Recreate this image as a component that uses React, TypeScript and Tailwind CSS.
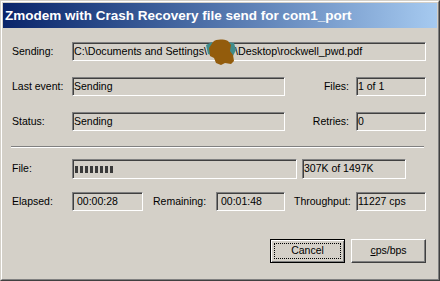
import React from "react";

const sunken =
  "flex items-center border border-t-[#808080] border-l-[#808080] border-b-white border-r-white shadow-[inset_1px_1px_0_#404040]";

interface FieldProps {
  className: string;
  children?: React.ReactNode;
}

const Field: React.FC<FieldProps> = ({ className, children }) => (
  <div className={`${sunken} ${className}`}>{children}</div>
);

const Label: React.FC<FieldProps> = ({ className, children }) => (
  <div className={`flex items-center whitespace-nowrap ${className}`}>{children}</div>
);

const App: React.FC = () => {
  return (
    <div className="w-[440px] h-[281px] bg-[#d4d0c8] border border-t-[#d4d0c8] border-l-[#d4d0c8] border-b-[#404040] border-r-[#404040] font-['Liberation_Sans',Arial,sans-serif] text-[10.5px] text-black">
      <div className="h-full p-[1px] border border-t-white border-l-white border-b-[#808080] border-r-[#808080]">
        {/* title bar */}
        <div className="h-[25px] flex items-center pl-[2px] bg-gradient-to-r from-[#0a246a] to-[#a6caf0]">
          <span className="text-white font-bold text-[13.5px] leading-none whitespace-nowrap">
            Zmodem with Crash Recovery file send for com1_port
          </span>
        </div>

        <div className="pl-[9px] flex flex-col">
          {/* Sending */}
          <div className="flex h-[19px] mt-[14px]">
            <Label className="w-[60px]">Sending:</Label>
            <Field className="w-[354px] pl-[1px] text-[10.7px] whitespace-nowrap">
              <span>C:\Documents and Settings\</span>
              <span className="relative self-stretch w-[28px] shrink-0">
                <svg
                  className="absolute left-[-3px] top-[-4px]"
                  width="34"
                  height="28"
                  viewBox="0 0 34 28"
                >
                  <path d="M2 6 L8 3 L10 10 L9 17 L4 15 Z" fill="#3f8c8c" />
                  <path d="M23 3 L30 4 L32 11 L29 17 L25 14 Z" fill="#3f8c8c" />
                  <path
                    d="M9 3 C12 0 19 0 24 2 L27 6 L26 12 L29 16 L30 22 L27 25 L21 24 L17 26 L12 24 L10 19 L6 17 L5 9 Z"
                    fill="#935c0c"
                  />
                </svg>
              </span>
              <span>\Desktop\rockwell_pwd.pdf</span>
            </Field>
          </div>

          {/* Last event */}
          <div className="flex h-[19px] mt-[16px]">
            <Label className="w-[60px]">Last event:</Label>
            <Field className="w-[213px] pl-[1px]">Sending</Field>
            <Label className="w-[64px] justify-end">Files:</Label>
            <Field className="w-[70px] ml-[7px] pl-[1px]">1 of 1</Field>
          </div>

          {/* Status */}
          <div className="flex h-[19px] mt-[16px]">
            <Label className="w-[60px]">Status:</Label>
            <Field className="w-[213px] pl-[1px]">Sending</Field>
            <Label className="w-[64px] justify-end">Retries:</Label>
            <Field className="w-[70px] ml-[7px] pl-[1px]">0</Field>
          </div>

          {/* separator */}
          <div className="w-[413px] h-[2px] -ml-[1px] mt-[15px] border-t border-t-[#808080] border-b border-b-white" />

          {/* File progress */}
          <div className="flex h-[20px] mt-[11px]">
            <Label className="w-[60px]">File:</Label>
            <Field className="w-[225px] pl-[2px] gap-[2px]">
              {Array.from({ length: 8 }).map((_, i) => (
                <div key={i} className="w-[3px] h-[7px] bg-[#3a3a3a]" />
              ))}
            </Field>
            <Field className="w-[104px] ml-[5px] pl-[1px]">307K of 1497K</Field>
          </div>

          {/* times */}
          <div className="flex h-[19px] mt-[13px]">
            <Label className="w-[60px]">Elapsed:</Label>
            <Field className="w-[71px] pl-[4px]">00:00:28</Field>
            <Label className="w-[63px] ml-[10px]">Remaining:</Label>
            <Field className="w-[69px] pl-[4px]">00:01:48</Field>
            <Label className="w-[62px] ml-[9px]">Throughput:</Label>
            <Field className="w-[70px] pl-[1px]">11227 cps</Field>
          </div>

          {/* buttons */}
          <div className="flex gap-[6px] mt-[28px] pl-[258px]">
            <button className="relative w-[75px] h-[24px] border border-black shadow-[inset_1px_1px_0_white,inset_-1px_-1px_0_#808080] flex items-center justify-center">
              <span className="absolute inset-[3px] border border-dotted border-black" />
              Cancel
            </button>
            <button className="w-[75px] h-[24px] border border-t-white border-l-white border-b-[#404040] border-r-[#404040] shadow-[inset_-1px_-1px_0_#808080] flex items-center justify-center">
              <span>
                <span className="underline">c</span>ps/bps
              </span>
            </button>
          </div>
        </div>
      </div>
    </div>
  );
};

export default App;
